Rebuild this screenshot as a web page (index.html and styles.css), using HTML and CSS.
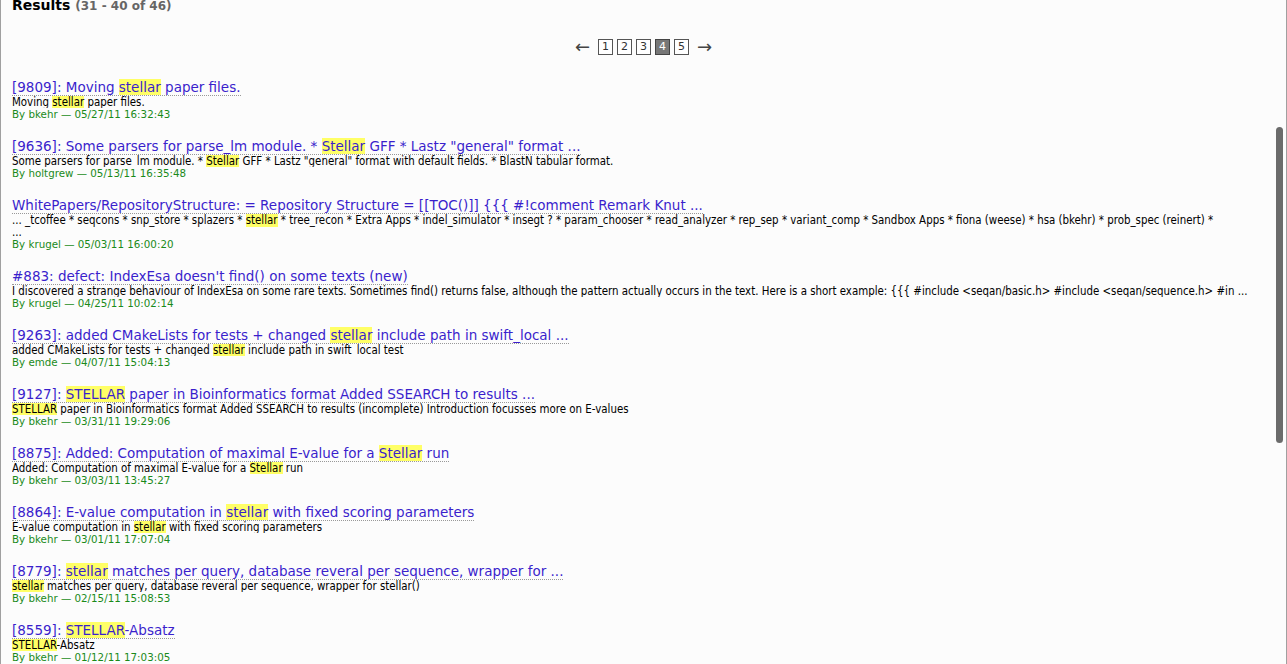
FILE: index.html
```html
<!DOCTYPE html>
<html>
<head>
<meta charset="utf-8">
<link rel="stylesheet" href="styles.css">
</head>
<body>
<div class="frame">
  <h2 class="heading">Results <span class="count">(31 - 40 of 46)</span></h2>
  <div class="paging">
    <span class="arrow">&larr;</span>
    <span class="page">1</span>
    <span class="page">2</span>
    <span class="page">3</span>
    <span class="page current">4</span>
    <span class="page">5</span>
    <span class="arrow">&rarr;</span>
  </div>
  <dl class="results">
    <dt><a class="title">[9809]: Moving <span class="hl">stellar</span> paper files.</a></dt>
    <dd class="excerpt">Moving <span class="hl">stellar</span> paper files.</dd>
    <dd class="meta">By bkehr — 05/27/11 16:32:43</dd>

    <dt><a class="title">[9636]: Some parsers for parse_lm module. * <span class="hl">Stellar</span> GFF * Lastz "general" format ...</a></dt>
    <dd class="excerpt">Some parsers for parse_lm module. * <span class="hl">Stellar</span> GFF * Lastz "general" format with default fields. * BlastN tabular format.</dd>
    <dd class="meta">By holtgrew — 05/13/11 16:35:48</dd>

    <dt><a class="title">WhitePapers/RepositoryStructure: = Repository Structure = [[TOC()]] {{{ #!comment Remark Knut ...</a></dt>
    <dd class="excerpt">... _tcoffee * seqcons * snp_store * splazers * <span class="hl">stellar</span> * tree_recon * Extra Apps * indel_simulator * insegt ? * param_chooser * read_analyzer * rep_sep * variant_comp * Sandbox Apps * fiona (weese) * hsa (bkehr) * prob_spec (reinert) *<br>...</dd>
    <dd class="meta">By krugel — 05/03/11 16:00:20</dd>

    <dt><a class="title">#883: defect: IndexEsa doesn't find() on some texts (new)</a></dt>
    <dd class="excerpt">I discovered a strange behaviour of IndexEsa on some rare texts. Sometimes find() returns false, although the pattern actually occurs in the text. Here is a short example: {{{ #include &lt;seqan/basic.h&gt; #include &lt;seqan/sequence.h&gt; #in ...</dd>
    <dd class="meta">By krugel — 04/25/11 10:02:14</dd>

    <dt><a class="title">[9263]: added CMakeLists for tests + changed <span class="hl">stellar</span> include path in swift_local ...</a></dt>
    <dd class="excerpt">added CMakeLists for tests + changed <span class="hl">stellar</span> include path in swift_local test</dd>
    <dd class="meta">By emde — 04/07/11 15:04:13</dd>

    <dt><a class="title">[9127]: <span class="hl">STELLAR</span> paper in Bioinformatics format Added SSEARCH to results ...</a></dt>
    <dd class="excerpt"><span class="hl">STELLAR</span> paper in Bioinformatics format Added SSEARCH to results (incomplete) Introduction focusses more on E-values</dd>
    <dd class="meta">By bkehr — 03/31/11 19:29:06</dd>

    <dt><a class="title">[8875]: Added: Computation of maximal E-value for a <span class="hl">Stellar</span> run</a></dt>
    <dd class="excerpt">Added: Computation of maximal E-value for a <span class="hl">Stellar</span> run</dd>
    <dd class="meta">By bkehr — 03/03/11 13:45:27</dd>

    <dt><a class="title">[8864]: E-value computation in <span class="hl">stellar</span> with fixed scoring parameters</a></dt>
    <dd class="excerpt">E-value computation in <span class="hl">stellar</span> with fixed scoring parameters</dd>
    <dd class="meta">By bkehr — 03/01/11 17:07:04</dd>

    <dt><a class="title">[8779]: <span class="hl">stellar</span> matches per query, database reveral per sequence, wrapper for ...</a></dt>
    <dd class="excerpt"><span class="hl">stellar</span> matches per query, database reveral per sequence, wrapper for stellar()</dd>
    <dd class="meta">By bkehr — 02/15/11 15:08:53</dd>

    <dt><a class="title">[8559]: <span class="hl">STELLAR</span>-Absatz</a></dt>
    <dd class="excerpt"><span class="hl">STELLAR</span>-Absatz</dd>
    <dd class="meta">By bkehr — 01/12/11 17:03:05</dd>
  </dl>
  <div class="scroll-thumb"></div>
</div>
</body>
</html>
```
FILE: styles.css
```css
html, body {
  margin: 0;
  padding: 0;
  background: #fcfcfc;
  overflow: hidden;
}
.frame {
  position: relative;
  height: 664px;
  box-sizing: border-box;
  border-left: 1px solid #a0a0a0;
  border-right: 1px solid #a0a0a0;
  padding: 0 24px 0 11px;
  font-family: "DejaVu Sans", Verdana, sans-serif;
  color: #000;
  overflow: hidden;
}
.heading {
  margin: -4px 0 0 0;
  font-size: 14px;
  line-height: 18px;
  font-weight: bold;
}
.count {
  color: #666;
  font-size: 12px;
}
.paging {
  display: flex;
  justify-content: center;
  align-items: center;
  gap: 4px;
  margin: 23px 0 0 0;
  height: 18px;
  padding-left: 13px;
}
.arrow {
  font-size: 18px;
  color: #444;
  line-height: 16px;
  margin: 0 4px;
}
.page {
  display: inline-block;
  box-sizing: border-box;
  width: 15px;
  height: 16px;
  border: 1px solid #555;
  font-size: 11px;
  line-height: 14px;
  text-align: center;
  color: #333;
  background: #fff;
}
.page.current {
  background: #777;
  color: #fff;
  border-color: #444;
}
.results {
  margin: 23px 0 0 0;
  padding: 0;
}
.results dt {
  margin: 18px 0 0 0;
  line-height: 15px;
  display: block;
}
.results dt:first-child {
  margin-top: 0;
}
.title {
  display: inline-block;
  font-size: 13.5px;
  color: #3a1fcc;
  border-bottom: 1px dotted #999;
  line-height: 15px;
}
.results dd {
  margin: 0;
}
.excerpt {
  font-family: "DejaVu Sans Condensed", "DejaVu Sans", sans-serif;
  font-size: 11.4px;
  line-height: 12px;
  white-space: nowrap;
  overflow: hidden;
}
.meta {
  font-size: 10.3px;
  line-height: 12px;
  margin-top: -1px;
  color: #1a8a1a;
}
.hl {
  background: #ffff66;
}
.scroll-thumb {
  position: absolute;
  right: 3px;
  top: 127px;
  width: 7px;
  height: 316px;
  border-radius: 4px;
  background: #6b6b6b;
}
```
